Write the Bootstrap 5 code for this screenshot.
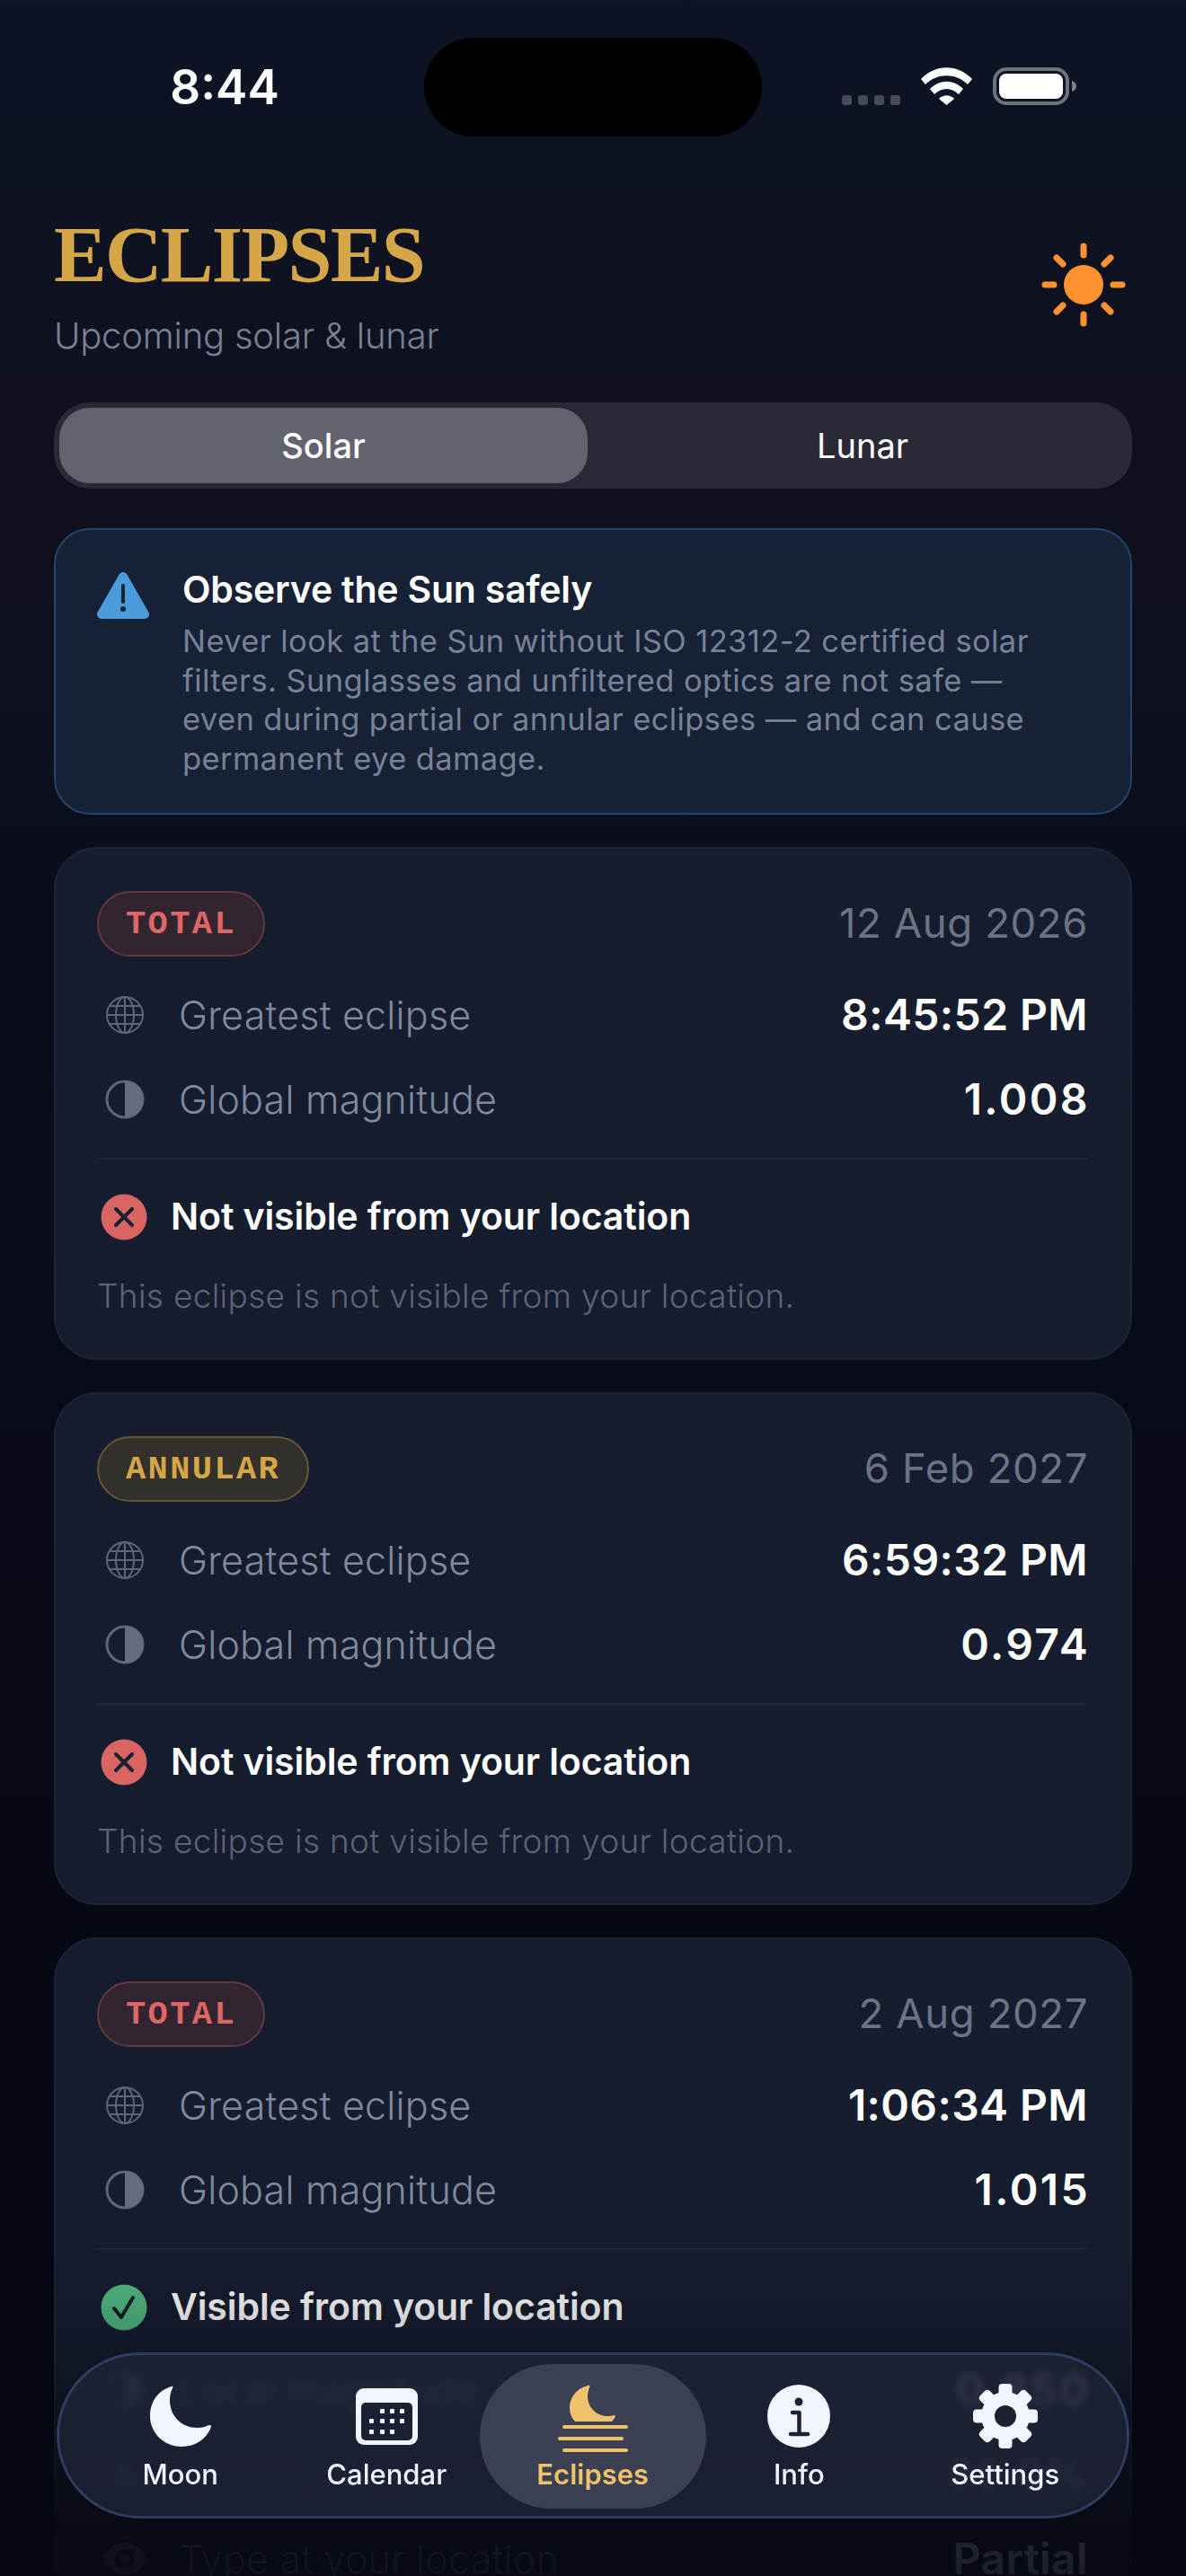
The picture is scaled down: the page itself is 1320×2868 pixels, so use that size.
<!DOCTYPE html>
<html lang="en">
<head>
    <meta charset="UTF-8">
    <meta name="viewport" content="width=device-width, initial-scale=1.0">
    <title>Eclipses</title>
    <link href="https://cdn.jsdelivr.net/npm/bootstrap@5.3.0/dist/css/bootstrap.min.css" rel="stylesheet">
    <style>
        body { background: #05070f; margin: 0; font-family: Inter, "Noto Sans", sans-serif; color: #fff; }
        .phone {
            width: 1320px; height: 2868px; overflow: hidden; position: relative;
            background: linear-gradient(180deg, #0d1424 0, #10111f 500px, #0a0e1c 1000px, #070914 2000px, #04060f 2868px);
        }
        /* status bar */
        .status-bar { height: 194px; padding-top: 42px; }
        .status-time { width: 472px; text-align: center; font-size: 53px; font-weight: 600; line-height: 110px; transform: translateX(14px); }
        .island { width: 376px; height: 110px; border-radius: 55px; background: #000; }
        .status-icons { padding-left: 89px; padding-top: 33px; gap: 23px; align-items: flex-end; height: 75px; }
        .sig-dots { gap: 7px; }
        .sig-dots span { width: 11px; height: 11px; border-radius: 3px; background: #474b58; }

        .page-pad { padding: 0 60px; }
        .eclipse-title { font-family: "Liberation Serif", serif; font-weight: 700; font-size: 88px; letter-spacing: -1.7px; line-height: 92px; color: #d4a647; margin: 44px 0 0; }
        .eclipse-sub { font-size: 40px; font-weight: 300; color: #7a8095; line-height: 50px; margin-top: 19px; letter-spacing: -.2px; }
        .sun-icon { margin-right: 7px; margin-top: 76px; }

        .segment { height: 96px; margin-top: 49px; padding: 6px; border-radius: 40px; background: #292937; }
        .seg-btn { flex: 1 1 0; border: 0; border-radius: 34px; color: #fff; font-size: 38px; line-height: 1; font-weight: 400; background: transparent; padding: 0; margin-left: 12px; }
        .seg-btn.is-on { flex: 0 0 588px; margin-left: 0; background: #636370; font-weight: 500; color: #fff; }

        .safety { margin-top: 44px; background: #172236; border: 2px solid #24446b; border-radius: 40px; padding: 41px 46px 39px; gap: 37px; }
        .safety-title { font-size: 41px; font-weight: 600; line-height: 50px; letter-spacing: -.2px; }
        .safety-body { font-size: 34.5px; font-weight: 400; line-height: 43.5px; color: #778298; margin-top: 11px; letter-spacing: .4px; }
        .safety-icon { margin-top: 5px; }

        .ec-card { margin-top: 36px; background: #161d2e; border: 2px solid #1c2538; border-radius: 48px; padding: 47px 47px 44px 46px; color: #fff; }
        .kind-pill { height: 73px; border-radius: 37px; padding: 0 30px; font-family: "Liberation Mono", monospace; font-weight: 700; font-size: 37px; letter-spacing: 2.4px; line-height: 71px; border: 2px solid; }
        .kind-total { background: #33252f; border-color: #64393f; color: #dd6666; }
        .kind-annular { background: #34302c; border-color: #635838; color: #d4a647; }
        .ec-date { font-size: 45.5px; color: #6c7385; font-weight: 400; letter-spacing: .6px; }
        .meta-row { height: 94px; }
        .meta-first { margin-top: 18px; }
        .meta-icon { width: 52px; margin-left: 5px; margin-right: 34px; }
        .meta-label { font-size: 43px; font-weight: 300; color: #808a9e; letter-spacing: .2px; }
        .meta-value { font-size: 48px; font-weight: 600; margin-left: auto; letter-spacing: .4px; }
        .mag-value { letter-spacing: 2.4px; margin-right: -2px; }
        .card-line { height: 2px; background: #1f2738; margin: 18px 0 38px; }
        .vis-row { height: 52px; padding-left: 4px; gap: 26px; font-size: 41px; font-weight: 600; letter-spacing: -.1px; }
        .vis-note { font-size: 37px; line-height: 50px; font-weight: 300; color: #5c6377; margin-top: 37px; letter-spacing: .3px; }
        .meta-more { margin-top: 19px; }

        /* dims what scrolls behind the tab bar */
        .bottom-fade { position: absolute; left: 0; right: 0; bottom: 0; height: 368px; background: linear-gradient(180deg, rgba(6,8,17,0) 0, rgba(6,8,17,.2) 25%, rgba(6,8,17,.88) 85%, rgba(6,8,17,.91) 100%); }

        .tab-bar { position: absolute; left: 63px; top: 2619px; width: 1194px; height: 185px; border-radius: 93px; padding: 10px 22px 10px 20px; border: 3px solid #2f3d62; background: rgba(30,35,55,.82); backdrop-filter: blur(4px); }
        .tab-item { flex: 0 0 229.5px; height: 161px; padding-top: 22px; color: #eef3ff; font-size: 31px; font-weight: 500; }
        .tab-item.is-on { flex: 0 0 252px; margin: 0 -11.25px; border-radius: 80px; background: #3b4153; color: #eec26b; font-weight: 600; }
        .tab-icon { height: 72px; }
        .tab-label { line-height: 40px; margin-top: 9px; }
    </style>
</head>
<body>
<svg width="0" height="0" class="d-block position-absolute">
    <defs>
        <symbol id="i-globe" viewBox="0 0 44 44">
            <g fill="none" stroke="#5f6679" stroke-width="2">
                <circle cx="22" cy="22" r="20"/>
                <ellipse cx="22" cy="22" rx="10" ry="20"/>
                <path d="M22 2v40M2 22h40M5 12h34M5 32h34"/>
            </g>
        </symbol>
        <symbol id="i-half" viewBox="0 0 44 44">
            <circle cx="22" cy="22" r="20" fill="none" stroke="#5f6679" stroke-width="3"/>
            <path d="M22 2a20 20 0 0 1 0 40z" fill="#666d80"/>
        </symbol>
        <symbol id="i-drop" viewBox="0 0 44 44">
            <path d="M22 2C14 14 4 22 4 30a18 13 0 0 0 36 0C40 22 30 14 22 2z" fill="#5f6679"/>
        </symbol>
        <symbol id="i-eye" viewBox="0 0 56 44">
            <path d="M1 22C8 9 18 3 28 3s20 6 27 19C48 35 38 41 28 41S8 35 1 22z" fill="#5f6679"/>
            <circle cx="28" cy="22" r="12" fill="#161d2e"/>
            <circle cx="28" cy="22" r="6" fill="#5f6679"/>
        </symbol>
        <symbol id="i-no" viewBox="0 0 52 52">
            <circle cx="26" cy="26" r="25.5" fill="#d86464"/>
            <path d="M17 17l18 18M35 17L17 35" stroke="#1b2032" stroke-width="4" stroke-linecap="round"/>
        </symbol>
        <symbol id="i-yes" viewBox="0 0 52 52">
            <circle cx="26" cy="26" r="25.5" fill="#52bb82"/>
            <path d="M15 27l8 10 13-22" fill="none" stroke="#14202a" stroke-width="4" stroke-linecap="round" stroke-linejoin="round"/>
        </symbol>
    </defs>
</svg>

<div class="phone">
    <div class="status-bar d-flex">
        <div class="status-time">8:44</div>
        <div class="island"></div>
        <div class="status-icons d-flex">
            <div class="sig-dots d-flex"><span></span><span></span><span></span><span></span></div>
            <svg width="57" height="42" viewBox="0 0 57 42">
                <path d="M0 13C16-4 41-4 57 13l-5 6C39 6 18 6 5 19z" fill="#fff"/>
                <path d="M10 24c11-11 26-11 37 0l-5 6c-8-8-19-8-27 0z" fill="#fff"/>
                <path d="M20 35c5-5 12-5 17 0l-8.500 7z" fill="#fff"/>
            </svg>
            <svg width="94" height="42" viewBox="0 0 94 42">
                <rect x="2" y="2" width="81" height="38" rx="13" fill="none" stroke="#6e727d" stroke-width="4"/>
                <rect x="7" y="7" width="71" height="28" rx="8" fill="#fff"/>
                <path d="M88 15c3 1 5 3 5 6s-2 5-5 6z" fill="#7d808a"/>
            </svg>
        </div>
    </div>

    <div class="page-pad">
        <div class="d-flex justify-content-between align-items-start">
            <div>
                <h1 class="eclipse-title">ECLIPSES</h1>
                <div class="eclipse-sub">Upcoming solar &amp; lunar</div>
            </div>
            <svg class="sun-icon" width="94" height="94" viewBox="-47 -47 94 94">
                <circle r="22" fill="#ff9230"/>
                <g stroke="#ff9230" stroke-width="7" stroke-linecap="round">
                    <path d="M0-43v10M0 33v10M-43 0h10M33 0h10M-30-30l7 7M23 23l7 7M30-30l-7 7M-23 23l-7 7"/>
                </g>
            </svg>
        </div>

        <div class="segment d-flex">
            <button class="btn seg-btn is-on" type="button">Solar</button>
            <button class="btn seg-btn" type="button">Lunar</button>
        </div>

        <div class="safety d-flex align-items-start">
            <svg class="safety-icon flex-shrink-0" width="58" height="54" viewBox="0 0 58 54">
                <path d="M29 6L5 48h48z" fill="#4a9bdc" stroke="#4a9bdc" stroke-width="10" stroke-linejoin="round"/>
                <path d="M29 16v18" stroke="#172236" stroke-width="4" stroke-linecap="round"/>
                <circle cx="29" cy="42" r="3" fill="#172236"/>
            </svg>
            <div>
                <div class="safety-title">Observe the Sun safely</div>
                <div class="safety-body">Never look at the Sun without ISO 12312-2 certified solar<br>filters. Sunglasses and unfiltered optics are not safe —<br>even during partial or annular eclipses — and can cause<br>permanent eye damage.</div>
            </div>
        </div>

        <div class="card ec-card">
            <div class="d-flex justify-content-between align-items-center">
                <span class="kind-pill kind-total">TOTAL</span>
                <span class="ec-date">12 Aug 2026</span>
            </div>
            <div class="meta-row meta-first d-flex align-items-center">
                <svg class="meta-icon" height="44"><use href="#i-globe"/></svg>
                <span class="meta-label">Greatest eclipse</span>
                <span class="meta-value">8:45:52 PM</span>
            </div>
            <div class="meta-row d-flex align-items-center">
                <svg class="meta-icon" height="44"><use href="#i-half"/></svg>
                <span class="meta-label">Global magnitude</span>
                <span class="meta-value mag-value">1.008</span>
            </div>
            <div class="card-line"></div>
            <div class="vis-row d-flex align-items-center">
                <svg width="52" height="52"><use href="#i-no"/></svg>
                <span>Not visible from your location</span>
            </div>
            <div class="vis-note">This eclipse is not visible from your location.</div>
        </div>

        <div class="card ec-card">
            <div class="d-flex justify-content-between align-items-center">
                <span class="kind-pill kind-annular">ANNULAR</span>
                <span class="ec-date">6 Feb 2027</span>
            </div>
            <div class="meta-row meta-first d-flex align-items-center">
                <svg class="meta-icon" height="44"><use href="#i-globe"/></svg>
                <span class="meta-label">Greatest eclipse</span>
                <span class="meta-value">6:59:32 PM</span>
            </div>
            <div class="meta-row d-flex align-items-center">
                <svg class="meta-icon" height="44"><use href="#i-half"/></svg>
                <span class="meta-label">Global magnitude</span>
                <span class="meta-value mag-value">0.974</span>
            </div>
            <div class="card-line"></div>
            <div class="vis-row d-flex align-items-center">
                <svg width="52" height="52"><use href="#i-no"/></svg>
                <span>Not visible from your location</span>
            </div>
            <div class="vis-note">This eclipse is not visible from your location.</div>
        </div>

        <div class="card ec-card">
            <div class="d-flex justify-content-between align-items-center">
                <span class="kind-pill kind-total">TOTAL</span>
                <span class="ec-date">2 Aug 2027</span>
            </div>
            <div class="meta-row meta-first d-flex align-items-center">
                <svg class="meta-icon" height="44"><use href="#i-globe"/></svg>
                <span class="meta-label">Greatest eclipse</span>
                <span class="meta-value">1:06:34 PM</span>
            </div>
            <div class="meta-row d-flex align-items-center">
                <svg class="meta-icon" height="44"><use href="#i-half"/></svg>
                <span class="meta-label">Global magnitude</span>
                <span class="meta-value mag-value">1.015</span>
            </div>
            <div class="card-line"></div>
            <div class="vis-row d-flex align-items-center">
                <svg width="52" height="52"><use href="#i-yes"/></svg>
                <span>Visible from your location</span>
            </div>
            <div class="meta-row meta-more d-flex align-items-center">
                <svg class="meta-icon" height="44"><use href="#i-half"/></svg>
                <span class="meta-label">Local magnitude</span>
                <span class="meta-value mag-value">0.850</span>
            </div>
            <div class="meta-row d-flex align-items-center">
                <svg class="meta-icon" height="44"><use href="#i-drop"/></svg>
                <span class="meta-label">Obscuration</span>
                <span class="meta-value">80.0%</span>
            </div>
            <div class="meta-row d-flex align-items-center">
                <svg class="meta-icon" height="44"><use href="#i-eye"/></svg>
                <span class="meta-label">Type at your location</span>
                <span class="meta-value">Partial</span>
            </div>
        </div>
    </div>

    <div class="bottom-fade"></div>

    <nav class="tab-bar d-flex">
        <div class="tab-item d-flex flex-column align-items-center">
            <svg class="tab-icon" width="68" viewBox="0 -2 68 72">
                <path d="M24 1C9 5 0 18 0 34c0 19 16 34 35 34 16 0 28-9 33-22 0-2-1-2-3-2-3 2-7 3-12 3-18 0-31-13-31-31 0-5 1-9 3-13 1-2 0-3-1-2z" fill="#f1f5ff"/>
            </svg>
            <div class="tab-label">Moon</div>
        </div>
        <div class="tab-item d-flex flex-column align-items-center">
            <svg class="tab-icon" width="69" viewBox="0 -5 69 72">
                <rect width="69" height="63" rx="9" fill="#f1f5ff"/>
                <rect x="6" y="16" width="57" height="42" rx="5" fill="#1b2032"/>
                <g fill="#f1f5ff">
                    <rect x="27" y="23" width="5" height="5" rx="1"/><rect x="38" y="23" width="5" height="5" rx="1"/><rect x="49" y="23" width="5" height="5" rx="1"/>
                    <rect x="15" y="34" width="5" height="5" rx="1"/><rect x="27" y="34" width="5" height="5" rx="1"/><rect x="38" y="34" width="5" height="5" rx="1"/><rect x="49" y="34" width="5" height="5" rx="1"/>
                    <rect x="15" y="46" width="5" height="5" rx="1"/><rect x="27" y="46" width="5" height="5" rx="1"/><rect x="38" y="46" width="5" height="5" rx="1"/>
                </g>
            </svg>
            <div class="tab-label">Calendar</div>
        </div>
        <div class="tab-item is-on d-flex flex-column align-items-center">
            <svg class="tab-icon" width="78" viewBox="0 0 78 72" overflow="visible">
                <path d="M33 2C21 5 13 15 13 27c0 6 2 11 6 15h41c2-2 3-4 4-6 0-1-1-1-2-1-2 1-5 1-7 1-12 0-22-10-22-22 0-4 1-7 2-10 1-2 0-3-2-2z" fill="#eec26b"/>
                <path d="M7 48h69M2 61h69M7 74h69" stroke="#eec26b" stroke-width="4" stroke-linecap="round"/>
            </svg>
            <div class="tab-label">Eclipses</div>
        </div>
        <div class="tab-item d-flex flex-column align-items-center">
            <svg class="tab-icon" width="70" viewBox="0 -1 70 72">
                <circle cx="35" cy="35" r="35" fill="#f1f5ff"/>
                <circle cx="35" cy="19" r="4.500" fill="#1b2032"/>
                <path d="M28 31h7.500v23M26 55h19" fill="none" stroke="#1b2032" stroke-width="4.500" stroke-linecap="round" stroke-linejoin="round"/>
            </svg>
            <div class="tab-label">Info</div>
        </div>
        <div class="tab-item d-flex flex-column align-items-center">
            <svg class="tab-icon" width="72" viewBox="-36 -36 72 72">
                <g fill="#f1f5ff">
                    <circle r="27"/>
                    <rect x="-7.500" y="-36" width="15" height="72" rx="4"/>
                    <rect x="-7.500" y="-36" width="15" height="72" rx="4" transform="rotate(45)"/>
                    <rect x="-7.500" y="-36" width="15" height="72" rx="4" transform="rotate(90)"/>
                    <rect x="-7.500" y="-36" width="15" height="72" rx="4" transform="rotate(135)"/>
                </g>
                <circle r="12" fill="#1b2032"/>
            </svg>
            <div class="tab-label">Settings</div>
        </div>
    </nav>
</div>

<script src="https://cdn.jsdelivr.net/npm/bootstrap@5.3.0/dist/js/bootstrap.bundle.min.js"></script>
</body>
</html>
